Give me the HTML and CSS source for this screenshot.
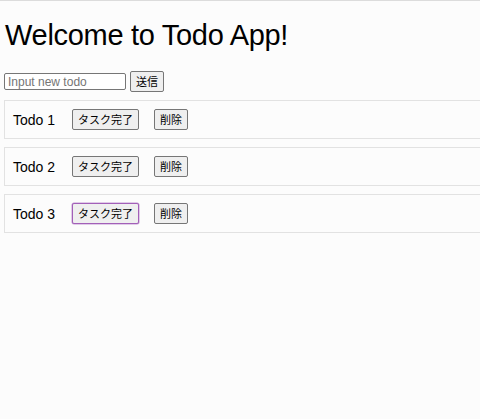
FILE: index.html
```html
<!DOCTYPE html>
<html lang="ja">
<head>
<meta charset="utf-8">
<link rel="stylesheet" href="styles.css">
</head>
<body>
<div class="topline"></div>
<div class="app">
  <h1 class="title">Welcome to Todo App!</h1>
  <form class="add-form">
    <input class="add-input" type="text" placeholder="Input new todo">
    <button class="btn" type="button">送信</button>
  </form>
  <ul class="todo-list">
    <li class="todo"><span class="todo-name">Todo 1</span><button class="btn" type="button">タスク完了</button><button class="btn" type="button">削除</button></li>
    <li class="todo"><span class="todo-name">Todo 2</span><button class="btn" type="button">タスク完了</button><button class="btn" type="button">削除</button></li>
    <li class="todo"><span class="todo-name">Todo 3</span><button class="btn btn-focus" type="button">タスク完了</button><button class="btn" type="button">削除</button></li>
  </ul>
</div>
</body>
</html>
```
FILE: styles.css
```css
html, body {
  margin: 0;
  padding: 0;
  background: #fcfcfc;
  font-family: "Liberation Sans", "Noto Sans CJK JP", sans-serif;
  color: #000;
}
.topline {
  height: 1px;
  background: #dcdcdc;
}
.app {
  padding: 0 0 0 4px;
}
.title {
  margin: 0;
  padding-top: 15px;
  padding-left: 1px;
  font-size: 29px;
  font-weight: 400;
  line-height: 38px;
  letter-spacing: -0.3px;
}
.add-form {
  display: flex;
  align-items: center;
  gap: 4px;
  margin-top: 17px;
  height: 21px;
}
.add-input {
  box-sizing: border-box;
  width: 122px;
  height: 17px;
  margin: 0;
  padding: 0 3px;
  border: 1px solid #767676;
  border-radius: 2px;
  font-family: "Liberation Sans", sans-serif;
  font-size: 12px;
  background: #fff;
}
.add-input::placeholder {
  color: #757575;
}
.btn {
  box-sizing: border-box;
  height: 21px;
  margin: 0;
  padding: 0 5px;
  border: 1px solid #767676;
  border-radius: 2px;
  background: #efefef;
  font-family: "Noto Sans CJK JP", sans-serif;
  font-size: 11px;
  line-height: 19px;
  color: #000;
}
.btn-focus {
  border-color: #a25fb8;
  box-shadow: 0 0 0 0.5px #c49ad3;
}
.todo-list {
  list-style: none;
  margin: 8px 0 0;
  padding: 0;
  display: flex;
  flex-direction: column;
  gap: 8px;
}
.todo {
  box-sizing: border-box;
  height: 39px;
  border: 1px solid #e2e2e2;
  border-right: none;
  display: flex;
  align-items: center;
  padding-left: 8px;
}
.todo-name {
  font-size: 14px;
  width: 59px;
}
.todo .btn + .btn {
  margin-left: 15px;
}
```
